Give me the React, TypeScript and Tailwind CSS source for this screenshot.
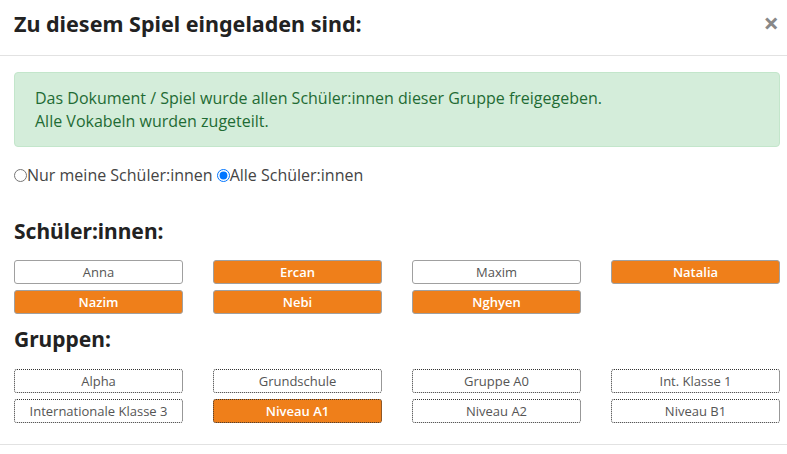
const students = [
  { name: "Anna", on: false },
  { name: "Ercan", on: true },
  { name: "Maxim", on: false },
  { name: "Natalia", on: true },
  { name: "Nazim", on: true },
  { name: "Nebi", on: true },
  { name: "Nghyen", on: true },
];

const groups = [
  { name: "Alpha", on: false },
  { name: "Grundschule", on: false },
  { name: "Gruppe A0", on: false },
  { name: "Int. Klasse 1", on: false },
  { name: "Internationale Klasse 3", on: false },
  { name: "Niveau A1", on: true },
  { name: "Niveau A2", on: false },
  { name: "Niveau B1", on: false },
];

const heading = { fontFamily: '"Noto Sans", "DejaVu Sans", sans-serif' };

function Chip({ name, on, dotted }: { name: string; on: boolean; dotted?: boolean }) {
  const border = dotted ? "border-dotted border-[#333]" : "border-[#a0a0a0]";
  return (
    <button
      className={`h-6 rounded-[3px] border text-[13px] leading-none ${border} ${
        on ? "bg-[#ef7f1a] text-white font-semibold" : "bg-white text-[#555]"
      }`}
    >
      {name}
    </button>
  );
}

export default function App() {
  return (
    <div className="w-[787px] h-[454px] bg-white text-[#212529]" style={{ fontFamily: '"Open Sans", sans-serif' }}>
      <div className="h-[56px] pl-[14px] pr-[8px] pb-[6px] flex items-center justify-between border-b border-[#e2e2e2]">
        <h1 className="text-[21.5px] font-bold text-[#222]" style={heading}>
          Zu diesem Spiel eingeladen sind:
        </h1>
        <span className="text-[27px] font-bold text-[#888] leading-none mt-[-5px]" style={heading}>
          ×
        </span>
      </div>

      <div className="pl-[14px] pr-[7px] pt-[16px]">
        <div className="h-[75px] rounded border border-[#c3e6cb] bg-[#d4edda] px-[20px] pt-[14px] text-[16px] leading-[23px] text-[#1f6b34]">
          <p>Das Dokument / Spiel wurde allen Schüler:innen dieser Gruppe freigegeben.</p>
          <p>Alle Vokabeln wurden zugeteilt.</p>
        </div>

        <div className="mt-[16px] flex items-center text-[16px] text-[#444]">
          <label className="flex items-center">
            <input type="radio" name="who" className="w-[13px] h-[13px]" />
            <span>Nur meine Schüler:innen</span>
          </label>
          <label className="flex items-center ml-[4px]">
            <input type="radio" name="who" defaultChecked className="w-[13px] h-[13px]" />
            <span>Alle Schüler:innen</span>
          </label>
        </div>

        <h2 className="mt-[30px] text-[21px] font-bold text-[#222] leading-[28px]" style={heading}>
          Schüler:innen:
        </h2>
        <div className="mt-[15px] grid grid-cols-4 gap-x-[30px] gap-y-[6px]">
          {students.map((s) => (
            <Chip key={s.name} name={s.name} on={s.on} />
          ))}
        </div>

        <h2 className="mt-[11px] text-[21px] font-bold text-[#222] leading-[28px]" style={heading}>
          Gruppen:
        </h2>
        <div className="mt-[16px] grid grid-cols-4 gap-x-[30px] gap-y-[6px]">
          {groups.map((g) => (
            <Chip key={g.name} name={g.name} on={g.on} dotted />
          ))}
        </div>
      </div>

      <div className="mt-[21px] border-t border-[#e2e2e2]" />
    </div>
  );
}
